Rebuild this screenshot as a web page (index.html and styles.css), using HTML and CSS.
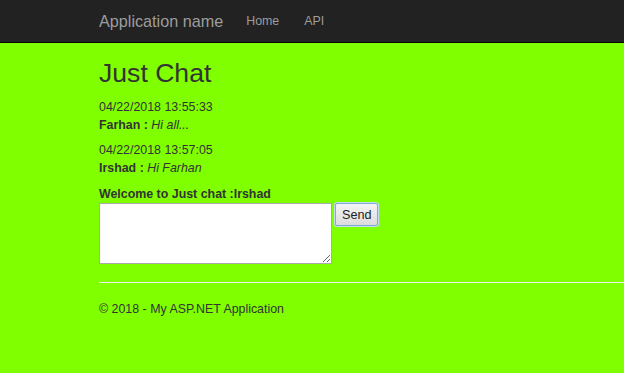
FILE: index.html
```html
<!DOCTYPE html>
<html lang="en">
<head>
  <meta charset="UTF-8">
  <title>Just Chat - My ASP.NET Application</title>
  <link rel="stylesheet" href="styles.css">
</head>
<body>
  <div class="navbar">
    <div class="container nav-inner">
      <a class="brand" href="#">Application name</a>
      <ul class="nav">
        <li><a href="#">Home</a></li>
        <li><a href="#">API</a></li>
      </ul>
    </div>
  </div>

  <div class="container body-content">
    <h2>Just Chat</h2>

    <div id="messages">
      <div class="msg">
        <div class="stamp">04/22/2018 13:55:33</div>
        <div><b>Farhan :</b> <i>Hi all...</i></div>
      </div>
      <div class="msg">
        <div class="stamp">04/22/2018 13:57:05</div>
        <div><b>Irshad :</b> <i>Hi Farhan</i></div>
      </div>
    </div>

    <label class="welcome" for="msgText">Welcome to Just chat :Irshad</label>
    <div class="send-row">
      <textarea id="msgText"></textarea>
      <button class="send">Send</button>
    </div>

    <hr>
    <footer>
      <p>&copy; 2018 - My ASP.NET Application</p>
    </footer>
  </div>
</body>
</html>
```

FILE: styles.css
```css
body { margin: 0; font-family: "Liberation Sans", Arial, sans-serif; font-size: 12.4px; line-height: 18px; color: #333; background: #80ff00; }
a { text-decoration: none; }
.container { padding-left: 99px; }

.navbar { background: #222; border-bottom: 1px solid #080808; height: 42px; }
.nav-inner { display: flex; align-items: center; height: 42px; }
.brand { color: #9d9d9d; font-size: 16.2px; line-height: 42px; }
.nav { display: flex; list-style: none; margin: 0 0 0 23px; padding: 0; gap: 25px; }
.nav a { color: #9d9d9d; font-size: 12.4px; line-height: 42px; }

.body-content { padding-top: 16px; }
h2 { font-size: 26.6px; font-weight: normal; line-height: 1.1; margin: 0 0 10px; }
.msg { margin-bottom: 7px; }
.welcome { display: block; font-weight: bold; margin-top: 8px; }
.send-row { display: flex; align-items: flex-start; gap: 3px; }
textarea { width: 229px; height: 57px; margin: 0; padding: 1px; border: 1px solid #a9a9a9; background: #fff; font-family: "Liberation Sans", Arial, sans-serif; font-size: 12.4px; }
.send { height: 23px; padding: 0 6px; font-family: "Liberation Sans", Arial, sans-serif; font-size: 12.6px; color: #222; background: linear-gradient(#f4f4f4, #dcdcdc); border: 1px solid #7eaad6; border-radius: 2px; box-shadow: 0 0 0 1px #c6dcf0; }
hr { border: 0; border-top: 1px solid #eee; margin: 18px 0 0; }
footer p { margin: 0; padding-top: 17px; }
```
